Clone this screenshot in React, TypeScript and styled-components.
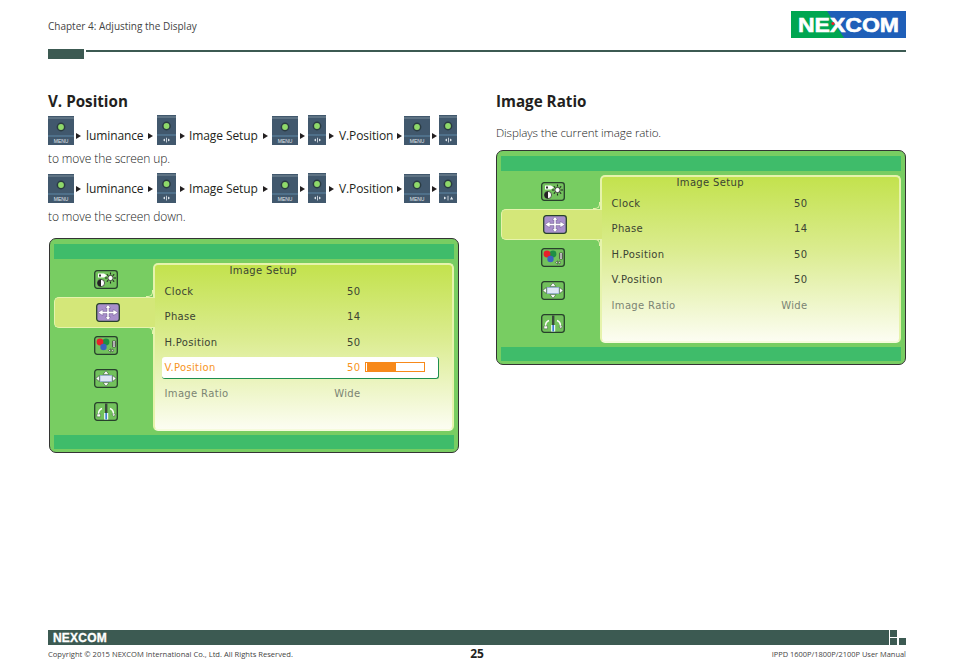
import React from 'react'
import styled, { createGlobalStyle, css } from 'styled-components'

const Global = createGlobalStyle`
  html, body {
    margin: 0;
    padding: 0;
    background: #fff;
  }
  body {
    font-family: "Open Sans", "Noto Sans", "Liberation Sans", sans-serif;
    color: #231f20;
  }
`

const Page = styled.div`
  width: 954px;
  height: 672px;
  box-sizing: border-box;
  padding: 11px 48px 0;
  display: flex;
  flex-direction: column;
  overflow: hidden;
`

const Header = styled.header`
  display: flex;
  justify-content: space-between;
  align-items: flex-start;
  height: 38px;
`

const Chapter = styled.div`
  font-size: 10px;
  line-height: 14px;
  margin-top: 8px;
  color: #444;
`

const Rule = styled.div`
  display: flex;
  gap: 2px;
  height: 10px;
  width: 858px;
`

const RuleBlock = styled.div`
  width: 36px;
  height: 10px;
  background: #3c5a52;
`

const RuleLine = styled.div`
  flex: 1;
  height: 2px;
  margin-top: 1px;
  background: #3c5a52;
`

const Columns = styled.main`
  flex: 1;
  display: grid;
  grid-template-columns: 448px 410px;
  margin-top: 31px;
`

const Column = styled.section`
  min-width: 0;
`

const Heading = styled.h2`
  margin: 0 0 3px;
  font-size: 15.2px;
  line-height: 22px;
  font-weight: 700;
  color: #231f20;
`

// $drop pushes the words and arrows down against the buttons (first row of the manual sits low)
const Steps = styled.div<{ $drop?: number }>`
  --drop: ${p => p.$drop ?? 0}px;
  display: flex;
  align-items: center;
  height: 30px;
  font-size: 12px;
  letter-spacing: -0.1px;
  color: #231f20;
`

const Arrow = styled.span<{ $l?: number; $r?: number }>`
  flex: none;
  width: 0;
  height: 0;
  margin: calc(var(--drop) + 1px) ${p => p.$r ?? 3}px 0 ${p => p.$l ?? 2}px;
  border-left: 5px solid #231f20;
  border-top: 3px solid transparent;
  border-bottom: 3px solid transparent;
`

const StepLabel = styled.span<{ $w: number }>`
  flex: none;
  width: ${p => p.$w}px;
  margin: var(--drop) 2px 0;
  white-space: nowrap;
`

const Note = styled.p`
  margin: 0;
  height: 28px;
  font-size: 12px;
  line-height: 27px;
  font-weight: 300;
  letter-spacing: -0.1px;
  color: #222;
`

const RatioNote = styled(Note)`
  margin-top: 10px;
  font-size: 11.6px;
  line-height: 22px;
`

const ButtonArt = styled.svg`
  display: block;
  flex: none;
`

type ButtonKind = 'menu' | 'volume' | 'play'

const PanelButton: React.FC<{ kind: ButtonKind; wide?: boolean }> = ({ kind, wide }) => {
  const w = kind === 'menu' ? 26 : wide ? 19 : 18
  const h = kind === 'menu' ? 29 : 30
  const cx = w / 2
  return (
    <ButtonArt width={w} height={h} viewBox={`0 0 ${w} ${h}`}>
      <rect width={w} height={h} fill="#41586d" />
      <rect y="1.5" width={w} height="1" fill="#7d8e9c" />
      <rect y="19.5" width={w} height="1" fill="#5f87a8" />
      <circle cx={cx} cy="11" r="4.4" fill="#2a3b42" />
      <circle cx={cx} cy="11" r="2.9" fill="#8fd96a" />
      {kind === 'menu' && (
        <text x={cx} y="26.5" textAnchor="middle" fontSize="5" fontFamily="Liberation Sans" fill="#e4e9ee">
          MENU
        </text>
      )}
      {kind === 'volume' && (
        <path d="M6 25l2-1.6v3.2zM9 22.8h.8v4.6H9zM13 25l-2-1.6v3.2z" fill="#e4e9ee" />
      )}
      {kind === 'play' && (
        <path d="M5 23.4l2.4 1.6L5 26.6zM8.6 22.8h.8v4.6h-.8zM11 26.6l1.6-3.2 1.6 3.2z" fill="#e4e9ee" />
      )}
    </ButtonArt>
  )
}

const Osd = styled.div`
  box-sizing: border-box;
  width: 410px;
  height: 215px;
  padding: 5px 4px 3px;
  border: 1px solid #333;
  border-bottom-width: 1.5px;
  border-right-width: 1.5px;
  border-radius: 7px;
  background: #78cd62;
  display: flex;
  flex-direction: column;
`

const OsdBar = styled.div`
  height: 14.5px;
  flex: none;
  background: #3fbc6a;
`

const OsdBody = styled.div`
  flex: 1;
  display: flex;
  margin: 4px 0;
`

const Tabs = styled.div`
  width: 99px;
  flex: none;
  display: flex;
  flex-direction: column;
`

const Tab = styled.div<{ $active?: boolean }>`
  position: relative;
  height: 33px;
  display: flex;
  align-items: center;
  justify-content: center;
  padding-left: 5px;
  box-sizing: border-box;
  ${p =>
    p.$active &&
    css`
      z-index: 1;
      height: 31px;
      margin: 1px -2px 1px 0;
      background: #d4e779;
      border: 1.5px solid #e6f3ac;
      border-right: 0;
      border-radius: 5px 0 0 5px;
      &::before,
      &::after {
        content: '';
        position: absolute;
        right: 2px;
        width: 6px;
        height: 6px;
        background: #78cd62;
        border-right: 1.5px solid #e6f3ac;
      }
      &::before {
        top: -7.5px;
        border-bottom: 1.5px solid #e6f3ac;
        border-bottom-right-radius: 5px;
      }
      &::after {
        bottom: -7.5px;
        border-top: 1.5px solid #e6f3ac;
        border-top-right-radius: 5px;
      }
    `}
`

const TabIcon = styled.svg`
  display: block;
`

const IconFrame: React.FC<{ fill?: string; children: React.ReactNode }> = ({ fill = '#72c15c', children }) => (
  <TabIcon width="24" height="19" viewBox="0 0 24 19">
    <rect x="0.7" y="0.7" width="22.6" height="17.6" rx="2.5" fill={fill} stroke="#28412c" strokeWidth="1.3" />
    {children}
  </TabIcon>
)

const PictureIcon = () => (
  <IconFrame>
    <circle cx="7" cy="13" r="3.6" fill="#fff" stroke="#222" strokeWidth="0.7" />
    <path d="M7 9.4a3.6 3.6 0 0 0 0 7.2z" fill="#222" />
    <path d="M4 3.5h6l3 2-3 2H4z" fill="#fff" />
    <path d="M5 4.5h2v2H5z" fill="#333" />
    <circle cx="16.5" cy="8" r="2.6" fill="#fff" stroke="#222" strokeWidth="0.8" />
    <path
      d="M16.5 2.5v2M16.5 11.5v2M11 8h2M20 8h2M12.8 4.3l1.4 1.4M18.8 10.3l1.4 1.4M20.2 4.3l-1.4 1.4M14.2 10.3l-1.4 1.4"
      stroke="#222"
      strokeWidth="1.1"
    />
  </IconFrame>
)

const PositionIcon = () => (
  <IconFrame fill="#a88fcb">
    <path
      d="M12 1.8l2.8 3.2H13v3.4h4.2V6.4L22 9.5l-4.8 3.1v-2H13V14h1.8L12 17.2 9.2 14H11v-3.4H6.8v2L2 9.5l4.8-3.1v2H11V5H9.2z"
      fill="#fff"
      stroke="#5b4a78"
      strokeWidth="0.4"
    />
  </IconFrame>
)

const ColorIcon = () => (
  <IconFrame>
    <circle cx="12" cy="6" r="3.4" fill="#1f8f45" />
    <circle cx="6" cy="6" r="3.4" fill="#e8202a" />
    <circle cx="9.5" cy="11" r="3.2" fill="#3d62c0" />
    <path d="M18.5 5h3v6h-3z" fill="#fff" stroke="#222" strokeWidth="0.6" />
    <path d="M18.5 7h3M18.5 9h3" stroke="#222" strokeWidth="0.7" />
    <path d="M14.5 14.5l2-1.6v3.2zM20 14.5l-2-1.6v3.2z" fill="#fff" stroke="#222" strokeWidth="0.5" />
  </IconFrame>
)

const SizeIcon = () => (
  <IconFrame>
    <rect x="6" y="6.5" width="12" height="6" fill="#dfe6f6" stroke="#8ea2d8" strokeWidth="0.7" />
    <path d="M12 1.8l3 3.6H9zM12 17.2l-3-3.6h6zM1.8 9.5l3.6-3v6zM22.2 9.5l-3.6-3v6z" fill="#fff" stroke="#28412c" strokeWidth="0.5" />
  </IconFrame>
)

const ToolIcon = () => (
  <IconFrame>
    <rect x="11" y="1.5" width="2.4" height="10" fill="#3a4a3c" />
    <rect x="10.2" y="11" width="4" height="6.5" fill="#fff" />
    <rect x="11.3" y="11" width="1.8" height="6.5" fill="#3d7fd0" />
    <path d="M8 6.5C5.5 7.5 4.5 9.5 4.5 12M16 6.5c2.500 1 3.500 3 3.500 5.500" fill="none" stroke="#fff" strokeWidth="1.4" />
    <path d="M3 12h3.500v2.800H3zM18 12h3.500l-1.700 2.800z" fill="#fff" stroke="#28412c" strokeWidth="0.4" />
  </IconFrame>
)

const Menu = styled.div`
  flex: 1;
  min-width: 0;
  box-sizing: border-box;
  margin-left: -0.5px;
  padding: 0 0 0 7px;
  border: 2px solid #e6f3ac;
  border-bottom-color: #f6fbdc;
  border-radius: 5px;
  background: linear-gradient(#c3e24d 0%, #dbec90 45%, #fcfdf2 100%);
  font-family: "DejaVu Sans", "Liberation Sans", sans-serif;
  font-size: 10px;
  letter-spacing: 0.35px;
  color: #3b4433;
`

const MenuTitle = styled.div`
  height: 13px;
  margin-bottom: 1px;
  padding-left: 68px;
  line-height: 12px;
  white-space: nowrap;
`

const Row = styled.div<{ $selected?: boolean; $muted?: boolean }>`
  box-sizing: border-box;
  width: 277px;
  height: 25.5px;
  display: flex;
  align-items: center;
  padding-left: 3px;
  color: ${p => (p.$selected ? '#f7941d' : p.$muted ? '#7b8473' : 'inherit')};
  ${p =>
    p.$selected &&
    css`
      height: 22px;
      margin: 1.75px 0;
      background: #fff;
      border-right: 1px solid #1f8f4f;
      border-bottom: 1px solid #1f8f4f;
      border-radius: 3px;
    `}
`

const RowName = styled.span`
  width: 131px;
`

const RowValue = styled.span`
  width: 65px;
  text-align: right;
`

const Slider = styled.div<{ $value: number }>`
  box-sizing: border-box;
  width: 60px;
  height: 10px;
  margin-left: 4px;
  border: 1px solid #f7891a;
  background: linear-gradient(90deg, #fff 1px, #f7891a 1px, #f7891a ${p => p.$value}%, #fff ${p => p.$value}%);
`

const rows = [
  { name: 'Clock', value: '50' },
  { name: 'Phase', value: '14' },
  { name: 'H.Position', value: '50' },
  { name: 'V.Position', value: '50' },
  { name: 'Image Ratio', value: 'Wide' },
]

const OsdScreen: React.FC<{ highlight?: boolean }> = ({ highlight }) => (
  <Osd>
    <OsdBar />
    <OsdBody>
      <Tabs>
        <Tab><PictureIcon /></Tab>
        <Tab $active><PositionIcon /></Tab>
        <Tab><ColorIcon /></Tab>
        <Tab><SizeIcon /></Tab>
        <Tab><ToolIcon /></Tab>
      </Tabs>
      <Menu>
        <MenuTitle>Image Setup</MenuTitle>
        {rows.map(r => {
          const selected = highlight && r.name === 'V.Position'
          return (
            <Row key={r.name} $selected={selected} $muted={r.name === 'Image Ratio'}>
              <RowName>{r.name}</RowName>
              <RowValue>{r.value}</RowValue>
              {selected && <Slider $value={52} />}
            </Row>
          )
        })}
      </Menu>
    </OsdBody>
    <OsdBar />
  </Osd>
)

const StepRow: React.FC<{ last: ButtonKind; drop?: number }> = ({ last, drop }) => (
  <Steps $drop={drop}>
    <PanelButton kind="menu" />
    <Arrow />
    <StepLabel $w={58}>luminance</StepLabel>
    <Arrow $r={4} />
    <PanelButton kind="volume" wide />
    <Arrow $l={4} $r={2} />
    <StepLabel $w={70}>Image Setup</StepLabel>
    <Arrow $r={4} />
    <PanelButton kind="menu" />
    <Arrow />
    <PanelButton kind="volume" />
    <Arrow $l={3} />
    <StepLabel $w={54}>V.Position</StepLabel>
    <Arrow $r={2} />
    <PanelButton kind="menu" />
    <Arrow $r={2} />
    <PanelButton kind={last} />
  </Steps>
)

const LogoArt = styled.svg`
  display: block;
`

const Logo = () => (
  <LogoArt width="115" height="27" viewBox="0 0 115 27">
    <rect width="115" height="27" fill="#1f5fb8" />
    <path d="M0 0h36l17 27H0z" fill="#00a651" />
    <text
      x="7"
      y="21"
      fontFamily="Liberation Sans"
      fontWeight="700"
      fontSize="21"
      textLength="101"
      lengthAdjust="spacingAndGlyphs"
      fill="#fff"
      stroke="#fff"
      strokeWidth="0.6"
    >
      NEXCOM
    </text>
    <circle cx="42" cy="12.5" r="1.6" fill="#e8202a" />
  </LogoArt>
)

const Footer = styled.footer`
  flex: none;
  height: 42px;
`

const FooterBand = styled.div`
  display: flex;
  gap: 1px;
  height: 15px;
`

const FooterBar = styled.div`
  flex: 1;
  display: flex;
  align-items: center;
  padding-left: 5px;
  background: #3c5a52;
  font-family: "Liberation Sans", sans-serif;
  font-size: 12px;
  font-weight: 700;
  letter-spacing: 0.2px;
  -webkit-text-stroke: 0.3px #fff;
  color: #fff;
`

const Squares = styled.div`
  width: 16px;
  display: grid;
  grid-template-columns: 7px 7px;
  grid-template-rows: 7px 7px;
  gap: 1px 2px;
`

const Square = styled.span<{ $off?: boolean }>`
  background: ${p => (p.$off ? 'transparent' : '#3c5a52')};
`

const FooterText = styled.div`
  display: grid;
  grid-template-columns: 1fr auto 1fr;
  align-items: center;
  height: 16px;
  font-size: 7.6px;
  color: #444;
`

const PageNumber = styled.span`
  font-size: 12px;
  font-weight: 700;
  color: #231f20;
`

const Manual = styled.span`
  text-align: right;
  font-size: 7.45px;
`

const OsdWrap = styled.div`
  margin: 7px 0 0 1px;
`

export default function App() {
  return (
    <Page>
      <Global />
      <Header>
        <Chapter>Chapter 4: Adjusting the Display</Chapter>
        <Logo />
      </Header>
      <Rule>
        <RuleBlock />
        <RuleLine />
      </Rule>
      <Columns>
        <Column>
          <Heading>V. Position</Heading>
          <StepRow last="volume" drop={11} />
          <Note>to move the screen up.</Note>
          <StepRow last="play" />
          <Note>to move the screen down.</Note>
          <OsdWrap>
            <OsdScreen highlight />
          </OsdWrap>
        </Column>
        <Column>
          <Heading>Image Ratio</Heading>
          <RatioNote>Displays the current image ratio.</RatioNote>
          <OsdScreen />
        </Column>
      </Columns>
      <Footer>
        <FooterBand>
          <FooterBar>NEXCOM</FooterBar>
          <Squares>
            <Square />
            <Square $off />
            <Square />
            <Square />
          </Squares>
        </FooterBand>
        <FooterText>
          <span>Copyright © 2015 NEXCOM International Co., Ltd. All Rights Reserved.</span>
          <PageNumber>25</PageNumber>
          <Manual>IPPD 1600P/1800P/2100P User Manual</Manual>
        </FooterText>
      </Footer>
    </Page>
  )
}
